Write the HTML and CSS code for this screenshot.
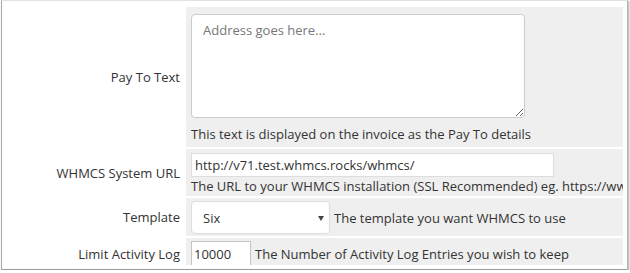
FILE: index.html
```html
<!DOCTYPE html>
<html lang="en">
<head>
    <meta charset="UTF-8">
    <title>General Settings</title>
    <link rel="stylesheet" href="styles.css">
</head>
<body>
    <div class="window">
        <div class="viewport">
            <table class="form">
                <tr>
                    <td class="fieldlabel">Pay To Text</td>
                    <td class="fieldarea row-payto">
                        <textarea class="payto" placeholder="Address goes here..."></textarea>
                        <div class="help">This text is displayed on the invoice as the Pay To details</div>
                    </td>
                </tr>
                <tr>
                    <td class="fieldlabel">WHMCS System URL</td>
                    <td class="fieldarea row-url">
                        <input type="text" class="input-url" value="http://v71.test.whmcs.rocks/whmcs/">
                        <div class="help">The URL to your WHMCS installation (SSL Recommended) eg. https://www.example.com/members/</div>
                    </td>
                </tr>
                <tr>
                    <td class="fieldlabel">Template</td>
                    <td class="fieldarea row-select">
                        <div class="inline">
                            <span class="select-wrap">
                                <select class="select">
                                    <option>Six</option>
                                </select>
                            </span>
                            <span>The template you want WHMCS to use</span>
                        </div>
                    </td>
                </tr>
                <tr>
                    <td class="fieldlabel">Limit Activity Log</td>
                    <td class="fieldarea row-small">
                        <div class="inline">
                            <input type="text" class="input-small" value="10000">
                            <span>The Number of Activity Log Entries you wish to keep</span>
                        </div>
                    </td>
                </tr>
            </table>
        </div>
    </div>
</body>
</html>
```

FILE: styles.css
```css
body {
    margin: 0;
    background-color: #fff;
    font-family: "Open Sans", "Liberation Sans", sans-serif;
    font-size: 13px;
    color: #333;
}

.window {
    margin-left: 1px;
    width: 625px;
    height: 268px;
    border-top: 1px solid #e2e2e2;
    border-left: 1px solid #a8a8a8;
    border-right: 1px solid #b4b4b4;
    border-bottom: 1px solid #9a9a9a;
    box-shadow: 1px 1px 2px rgba(0,0,0,0.35);
    background-color: #fff;
}

.viewport {
    margin: 0 4px 0 1px;
    height: 264px;
    overflow: hidden;
}

.form {
    width: 720px;
    margin-top: 4px;
    border-spacing: 2px;
    table-layout: fixed;
}

.fieldlabel {
    width: 175px;
    padding: 0 4px 0 0;
    text-align: right;
    background-color: #fff;
    white-space: nowrap;
}

.fieldarea {
    padding: 0 5px;
    background-color: #efefef;
    white-space: nowrap;
    overflow: hidden;
}

.row-payto {
    padding-top: 7px;
    padding-bottom: 4px;
}

.payto {
    display: block;
    box-sizing: border-box;
    width: 334px;
    height: 104px;
    margin: 0;
    padding: 6px 11px;
    border: 1px solid #ccc;
    border-radius: 4px;
    font-family: inherit;
    font-size: 13px;
    color: #333;
    resize: both;
}

.payto::placeholder {
    color: #777;
}

.help {
    margin-top: 7px;
    line-height: 18px;
}

.row-url {
    padding-top: 4px;
    padding-bottom: 1px;
}

.input-url {
    display: block;
    box-sizing: border-box;
    width: 363px;
    height: 24px;
    margin: 0;
    padding: 2px 3px;
    border: 1px solid #ddd;
    font-family: inherit;
    font-size: 13px;
    color: #333;
}

.row-url .help {
    margin-top: 0;
}

.inline {
    display: flex;
    align-items: center;
    gap: 4px;
}

.row-select {
    padding-top: 3px;
    padding-bottom: 2px;
}

.select-wrap {
    position: relative;
    display: block;
}

.select-wrap::after {
    content: "";
    position: absolute;
    right: 6px;
    top: 15px;
    border-left: 3px solid transparent;
    border-right: 3px solid transparent;
    border-top: 5px solid #444;
}

.select {
    appearance: none;
    -webkit-appearance: none;
    display: block;
    box-sizing: border-box;
    width: 139px;
    height: 33px;
    margin: 0;
    padding: 0 11px;
    border: 1px solid #ddd;
    border-radius: 4px;
    background-color: #fff;
    font-family: inherit;
    font-size: 13px;
    color: #333;
}

.row-small {
    padding-top: 3px;
    padding-bottom: 3px;
}

.input-small {
    box-sizing: border-box;
    width: 60px;
    height: 26px;
    margin: 0;
    padding: 2px 2px;
    border: 1px solid #c4c4c4;
    font-family: inherit;
    font-size: 13px;
    color: #333;
}
```
